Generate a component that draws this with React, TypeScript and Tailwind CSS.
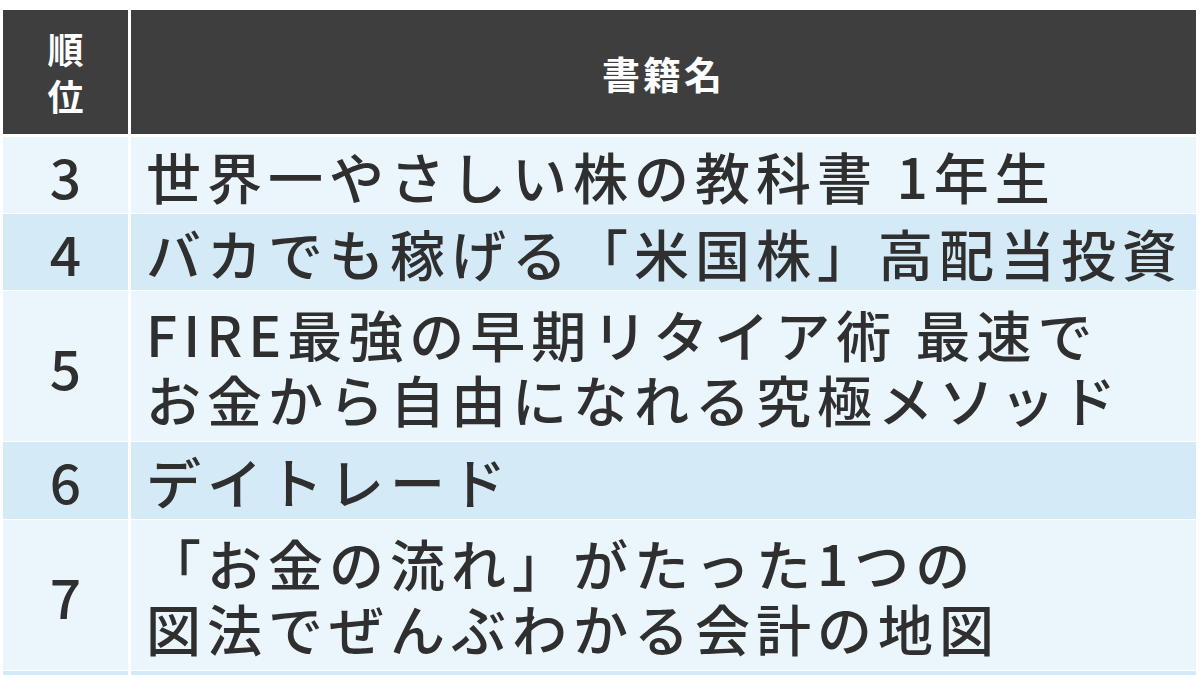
import React from "react";

const rows: { rank: string; lines: string[]; alt: boolean; h: string }[] = [
  { rank: "3", lines: ["世界一やさしい株の教科書 1年生"], alt: false, h: "h-[76px]" },
  { rank: "4", lines: ["バカでも稼げる「米国株」高配当投資"], alt: true, h: "h-[76px]" },
  { rank: "5", lines: ["FIRE最強の早期リタイア術 最速で", "お金から自由になれる究極メソッド"], alt: false, h: "h-[150px]" },
  { rank: "6", lines: ["デイトレード"], alt: true, h: "h-[77px]" },
  { rank: "7", lines: ["「お金の流れ」がたった1つの", "図法でぜんぶわかる会計の地図"], alt: false, h: "h-[150px]" },
];

export default function App() {
  return (
    <div
      className="w-[1200px] h-[675px] overflow-hidden bg-white pl-[3px] pr-[4px] pt-[10px] text-[#2f2f2f]"
      style={{ fontFamily: '"Noto Sans CJK JP", "Noto Sans", sans-serif' }}
    >
      <div className="grid grid-cols-[125px_1fr] gap-x-[3px] gap-y-[1px]">
        <div className="h-[124px] bg-[#3e3e3e] flex items-center justify-center">
          <div className="text-white font-bold text-[36px] leading-[47px] flex flex-col items-center">
            <span>順</span>
            <span>位</span>
          </div>
        </div>
        <div className="h-[124px] bg-[#3e3e3e] flex items-center justify-center">
          <span className="text-white font-bold text-[38px] tracking-[3px]">書籍名</span>
        </div>
        <div className="col-span-2 h-[1px]" />
        {rows.map((r) => (
          <React.Fragment key={r.rank}>
            <div
              className={`${r.h} ${r.alt ? "bg-[#d4eaf6]" : "bg-[#eaf5fc]"} flex items-center justify-center text-[55px] font-medium leading-none`}
            >
              {r.rank}
            </div>
            <div
              className={`${r.h} ${r.alt ? "bg-[#d4eaf6]" : "bg-[#eaf5fc]"} flex flex-col justify-center pl-[15px] text-[55px] font-medium leading-[65px] tracking-[6px] whitespace-nowrap`}
            >
              {r.lines.map((l, i) => (
                <div key={i}>{l}</div>
              ))}
            </div>
          </React.Fragment>
        ))}
        <div className="h-[40px] bg-[#d4eaf6]" />
        <div className="h-[40px] bg-[#d4eaf6]" />
      </div>
    </div>
  );
}
